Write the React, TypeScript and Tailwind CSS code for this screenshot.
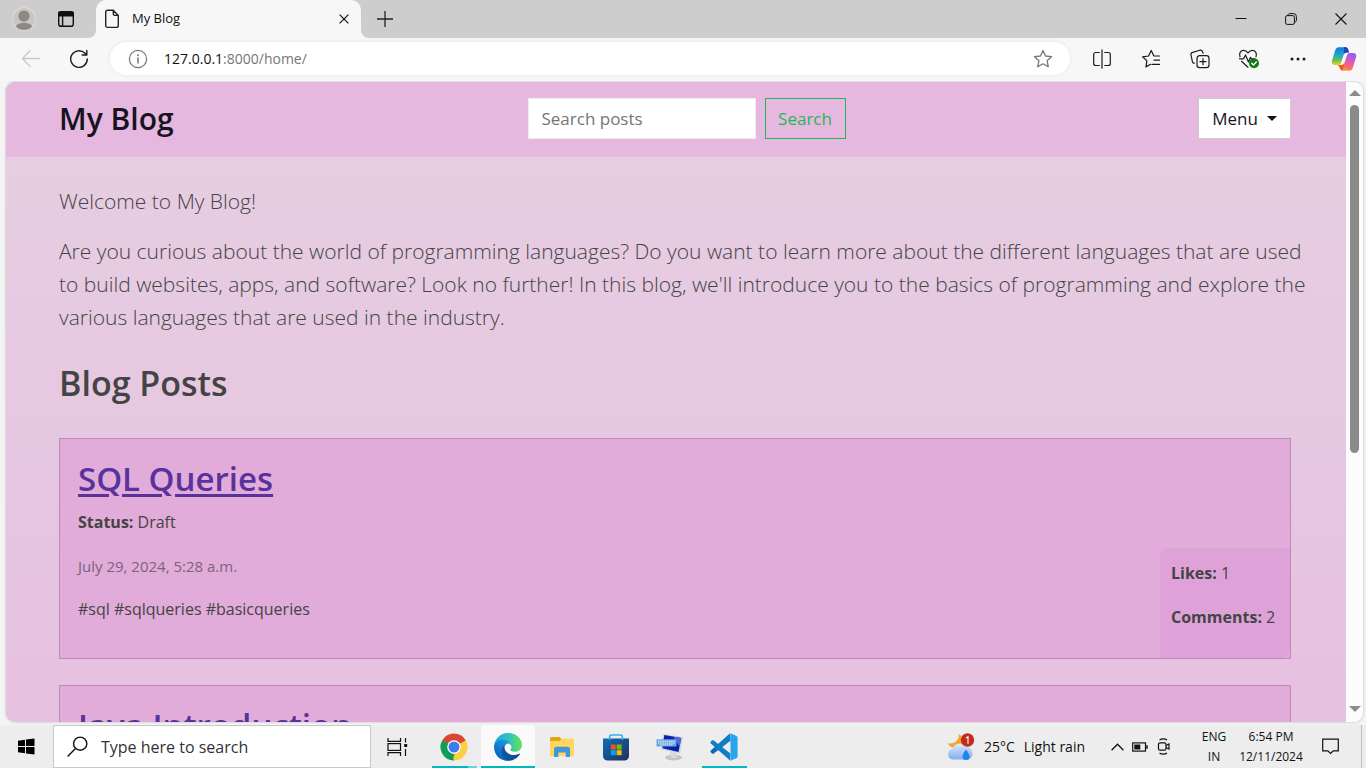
import React from "react";

type Post = { title: string; status?: string; date?: string; tags?: string; likes?: number; comments?: number };

const posts: Post[] = [
  { title: "SQL Queries", status: "Draft", date: "July 29, 2024, 5:28 a.m.", tags: "#sql #sqlqueries #basicqueries", likes: 1, comments: 2 },
  { title: "Java Introduction" },
];

function IconButton({ label, className, children }: { label: string; className: string; children: React.ReactNode }) {
  return (
    <button type="button" aria-label={label} className={`flex shrink-0 items-center justify-center ${className}`}>
      {children}
    </button>
  );
}

function Line({ size = 20, color = "#1b1b1b", width = 1.2, children }: { size?: number; color?: string; width?: number; children: React.ReactNode }) {
  return (
    <svg width={size} height={size} viewBox="0 0 20 20" fill="none" stroke={color} strokeWidth={width} strokeLinecap="round" strokeLinejoin="round">
      {children}
    </svg>
  );
}

function TabStrip() {
  return (
    <div className="flex h-[38px] shrink-0 bg-[#cdcdcd]">
      <IconButton label="Profile" className="w-12">
        <svg width="24" height="24" viewBox="0 0 24 24">
          <defs>
            <clipPath id="avatar">
              <circle cx="12" cy="12" r="11" />
            </clipPath>
          </defs>
          <circle cx="12" cy="12" r="11.4" fill="#c9c6c2" stroke="#dddbd8" strokeWidth="1.2" />
          <g clipPath="url(#avatar)" fill="#8b8885">
            <circle cx="12" cy="9" r="5.6" />
            <ellipse cx="12" cy="21.2" rx="9" ry="5.4" />
          </g>
        </svg>
      </IconButton>
      <IconButton label="Tab actions" className="w-9">
        <svg width="18" height="18" viewBox="0 0 18 18" fill="none" stroke="#111" strokeWidth="1.4">
          <rect x="1.7" y="1.7" width="14.6" height="14.6" rx="2.4" />
          <path d="M2 2.4h14v3.4H2z" fill="#111" />
          <path d="M5.6 6v10" />
        </svg>
      </IconButton>
      <div className="relative ml-3 flex w-[265px] items-center rounded-t-[10px] bg-[#f7f7f7] pl-[8px] pr-[9px] before:absolute before:-left-2 before:bottom-0 before:size-2 before:rounded-br-lg before:shadow-[4px_4px_0_4px_#f7f7f7] after:absolute after:-right-2 after:bottom-0 after:size-2 after:rounded-bl-lg after:shadow-[-4px_4px_0_4px_#f7f7f7]">
        <svg width="16" height="20" viewBox="0 0 16 20" fill="none" stroke="#222" strokeWidth="1.4" strokeLinejoin="round">
          <path d="M9.3 1.2H3.6a1.9 1.9 0 0 0-1.9 1.9v13.4a1.9 1.9 0 0 0 1.9 1.9h8.8a1.9 1.9 0 0 0 1.9-1.9V6.4zM9.3 1.2v3.6a1.6 1.6 0 0 0 1.6 1.6h3.4" />
        </svg>
        <span className="ml-3 flex-1 text-[13px] text-[#111]">My Blog</span>
        <IconButton label="Close tab" className="size-4">
          <svg width="10" height="10" viewBox="0 0 10 10" stroke="#111" strokeWidth="1.2">
            <path d="M.6.6l8.8 8.8M9.4.6L.6 9.4" />
          </svg>
        </IconButton>
      </div>
      <IconButton label="New tab" className="w-12">
        <svg width="16" height="16" viewBox="0 0 16 16" stroke="#222" strokeWidth="1.3">
          <path d="M8 0v16M0 8h16" />
        </svg>
      </IconButton>
      <div className="flex-1" />
      <IconButton label="Minimize" className="w-[50px]">
        <svg width="12" height="12" viewBox="0 0 12 12" stroke="#111" strokeWidth="1">
          <path d="M.5 5.5h11" />
        </svg>
      </IconButton>
      <IconButton label="Restore" className="w-[50px]">
        <svg width="12" height="12" viewBox="0 0 12 12" fill="none" stroke="#111" strokeWidth="1">
          <rect x=".6" y="2.6" width="8.8" height="8.8" rx="1.6" />
          <path d="M2.8 2.4C3 1.2 3.8.6 4.8.6h3.6a3 3 0 0 1 3 3v3.6c0 1-.6 1.8-1.8 2" />
        </svg>
      </IconButton>
      <IconButton label="Close" className="w-[50px]">
        <svg width="12" height="12" viewBox="0 0 12 12" stroke="#111" strokeWidth="1.1">
          <path d="M.5.5l11 11M11.5.5l-11 11" />
        </svg>
      </IconButton>
    </div>
  );
}

function Toolbar() {
  return (
    <div className="relative flex h-[43px] shrink-0 items-center bg-[#f7f7f7] pb-[2px] pl-[7px]">
      <IconButton label="Back" className="h-8 w-12">
        <Line color="#c9c9c9" width={1.3}>
          <path d="M18.5 9.5H1.5M9 1.8L1.5 9.5 9 17.2" />
        </Line>
      </IconButton>
      <IconButton label="Refresh" className="h-8 w-12">
        <Line width={1.4}>
          <path d="M18.3 10A8.3 8.3 0 1 1 15.8 4.1L17.8 6M17.8 1.4V6H13.2" />
        </Line>
      </IconButton>
      <div className="ml-[7px] flex h-[33px] flex-1 items-center rounded-full bg-white pl-[18px] pr-[17px] shadow-[0_0_4px_rgba(0,0,0,0.08)]">
        <Line color="#767676">
          <circle cx="10" cy="10" r="8.6" />
          <path d="M10 9v5" strokeWidth="1.5" />
          <path d="M10 6.1v.1" strokeWidth="1.9" />
        </Line>
        <a href="http://127.0.0.1:8000/home/" className="ml-4 flex-1 text-[14px] text-[#767676]">
          <span className="text-[#111]">127.0.0.1</span>:8000/home/
        </a>
        <IconButton label="Add to favorites" className="size-5">
          <Line color="#767676" width={1.3}>
            <path d="M10 1.5l2.5 5.5 6 .7-4.4 4.1 1.2 5.9L10 14.8l-5.3 2.9 1.2-5.9L1.5 7.7l6-.7z" />
          </Line>
        </IconButton>
      </div>
      <IconButton label="Split screen" className="ml-[7px] h-8 w-[49px]">
        <Line>
          <path d="M10 .8v18.4M7.3 3.5H3.7a2 2 0 0 0-2 2v9a2 2 0 0 0 2 2h3.6M12.7 3.5h3.6a2 2 0 0 1 2 2v9a2 2 0 0 1-2 2h-3.6" />
        </Line>
      </IconButton>
      <IconButton label="Favorites" className="h-8 w-[49px]">
        <Line>
          <path d="M18.5 7h-5.600L10.2 1.5 7.6 7l-6 .8 4.300 4.100-1 6 4.700-2.600M13 11.200h5.500M11 15.400h7.500" />
        </Line>
      </IconButton>
      <IconButton label="Collections" className="h-8 w-[49px]">
        <Line>
          <rect x="7" y="6.7" width="12" height="12" rx="2.6" />
          <path d="M13 9.700v6M10 12.700h6M4.300 14.200c-1 0-1.600-.6-1.900-1.500L1 6c-.3-1.300.3-2.300 1.600-2.600L9.800 1.200c1.200-.3 2.200.1 2.600 1.300l.8 1.700" />
        </Line>
      </IconButton>
      <IconButton label="Browser essentials" className="h-8 w-[49px]">
        <svg width="22" height="20" viewBox="0 0 22 20" fill="none" stroke="#1b1b1b" strokeWidth="1.2" strokeLinecap="round" strokeLinejoin="round">
          <path d="M2 7.800C.6 3.800 3 1.300 5.600 1.300c2 0 3.100.9 4.400 2.500 1.300-1.600 2.400-2.500 4.400-2.500 2.600 0 5 2.500 3.600 6.500M1.500 9.800h4l2-3.800 3 7 2-4.700 1 1.500h3M3.500 12.300l6.500 5.900" />
          <circle cx="16" cy="14.2" r="5" fill="#107c10" stroke="none" />
          <path d="M13.800 14.300l1.600 1.600 2.900-3" stroke="#fff" strokeWidth="1.4" />
        </svg>
      </IconButton>
      <IconButton label="Settings and more" className="h-8 w-[49px]">
        <svg width="16" height="4" viewBox="0 0 16 4" fill="#1b1b1b">
          <circle cx="2" cy="2" r="1.5" />
          <circle cx="8" cy="2" r="1.5" />
          <circle cx="14" cy="2" r="1.5" />
        </svg>
      </IconButton>
      <IconButton label="Copilot" className="h-8 w-[44px]">
        <svg width="26" height="24" viewBox="0 0 26 24">
          <defs>
            <linearGradient id="cpA" x1="0" y1="0" x2="0" y2="1">
              <stop offset="0" stopColor="#1b74e0" />
              <stop offset=".4" stopColor="#1ea3d8" />
              <stop offset=".7" stopColor="#5cc05c" />
              <stop offset="1" stopColor="#f2cf1d" />
            </linearGradient>
            <linearGradient id="cpB" x1=".6" y1="0" x2=".3" y2="1">
              <stop offset="0" stopColor="#9a5cf0" />
              <stop offset=".45" stopColor="#e05bb5" />
              <stop offset=".8" stopColor="#fb6f5f" />
              <stop offset="1" stopColor="#ffa43d" />
            </linearGradient>
          </defs>
          <path d="M18 5.500l-1-3C16.500.9 15.700.3 14.500.3H8C6 .3 4.800 1.500 4.200 3.300L1 13.500C.1 16.400 1.300 18 3.800 18h3c1.800 0 2.800-1 3.300-2.600l2.500-7.500C13 6.500 14 5.500 15.500 5.500z" fill="url(#cpA)" />
          <path d="M13 .3h1.500c1.500 0 2.200.8 2.600 2.200l1 3h-2.700c-1.200 0-2 .6-2.500 1.600z" fill="#1746b5" />
          <path d="M8 18.500l1 3c.5 1.600 1.300 2.200 2.500 2.200H18c2 0 3.200-1.200 3.800-3L25 10.500C25.900 7.600 24.700 6 22.200 6h-3c-1.800 0-2.800 1-3.300 2.600l-2.500 7.500c-.4 1.400-1.400 2.400-2.900 2.400z" fill="url(#cpB)" />
          <path d="M7 18h3.500c1.500 0 2.400-1 2.800-2.200l-1.500 7.800c-1.500 0-2.300-.7-2.700-2z" fill="#ee5a2a" />
        </svg>
      </IconButton>
    </div>
  );
}

function PostCard({ post }: { post: Post }) {
  return (
    <article className="relative min-h-[221px] shrink-0 border border-[#bb8ab6] bg-[#e1abda] px-[18px] pt-[19px] pb-9 text-[16px] leading-[26px] text-[#444]">
      <h2 className="text-[33px] font-semibold leading-[42px]">
        <a href="#post" className="text-[#5a329b] underline decoration-[3px] underline-offset-[3px]">
          {post.title}
        </a>
      </h2>
      {post.status && (
        <p className="mt-[9px]">
          <strong>Status:</strong> {post.status}
        </p>
      )}
      {post.date && <p className="mt-[18px] text-[15px] text-[#7b6478]">{post.date}</p>}
      {post.tags && <p className="mt-[17px]">{post.tags}</p>}
      {post.likes !== undefined && (
        <div className="absolute right-0 bottom-0 min-w-[130px] rounded-tl-[9px] rounded-br-[9px] bg-[#dfa2d8] px-[11px] pt-3 pb-7">
          <p>
            <strong>Likes:</strong> {post.likes}
          </p>
          <p className="mt-[18px]">
            <strong>Comments:</strong> {post.comments}
          </p>
        </div>
      )}
    </article>
  );
}

function BlogPage() {
  return (
    <div className="flex min-w-0 flex-1 flex-col overflow-hidden rounded-l-[9px] bg-linear-to-b from-[#e6cfe2] to-[#e6c1e0]">
      <header className="flex h-[75px] shrink-0 items-center justify-between bg-[#e6b8e0] pb-[2px] pl-[53px] pr-[55px]">
        <a href="#home" className="w-[320px] text-[30px] font-semibold text-[#16141f]">
          My Blog
        </a>
        <form className="mr-[33px] flex gap-[9px]" onSubmit={(e) => e.preventDefault()}>
          <input
            type="search"
            aria-label="Search posts"
            placeholder="Search posts"
            className="h-[41px] w-[228px] border border-[#ececec] bg-white px-[13px] text-[17px] text-[#222] placeholder:text-[#757575]"
          />
          <button type="submit" className="h-[41px] w-[81px] border border-[#1db954] text-[17px] text-[#1db954]">
            Search
          </button>
        </form>
        <div className="flex w-[264px] justify-end">
          <button type="button" className="flex h-[41px] w-[93px] items-center justify-center gap-[9px] border border-[#ccc] bg-white text-[17px] text-[#16141f]">
            Menu
            <span className="border-x-5 border-t-5 border-x-transparent border-t-[#16141f]" />
          </button>
        </div>
      </header>
      <main className="flex min-h-0 flex-1 flex-col overflow-hidden pl-[53px] pr-[35px] pt-7">
        <div className="flex shrink-0 flex-col gap-[17px] text-[21px] font-light leading-[33px] text-[#444]">
          <p>Welcome to My Blog!</p>
          <p>
            Are you curious about the world of programming languages? Do you want to learn more about the different languages that are used to build
            websites, apps, and software? Look no further! In this blog, we'll introduce you to the basics of programming and explore the various
            languages that are used in the industry.
          </p>
        </div>
        <h1 className="mt-7 text-[34px] font-semibold leading-[42px] text-[#444]">Blog Posts</h1>
        <div className="mr-5 mt-[34px] flex shrink-0 flex-col gap-[26px]">
          {posts.map((post) => (
            <PostCard key={post.title} post={post} />
          ))}
        </div>
      </main>
    </div>
  );
}

function Scrollbar() {
  return (
    <div className="flex w-[17px] shrink-0 flex-col items-center rounded-r-[9px] bg-[#fcfcfc] pb-[10px] pt-2">
      <span className="border-x-6 border-b-6 border-x-transparent border-b-[#8b8b8b]" />
      <span className="mt-[9px] h-[56%] w-[9px] rounded-full bg-[#8b8b8b]" />
      <span className="mt-auto border-x-6 border-t-6 border-x-transparent border-t-[#8b8b8b]" />
    </div>
  );
}

function TaskButton({ label, className = "", underline = "", children }: { label: string; className?: string; underline?: string; children: React.ReactNode }) {
  return (
    <button type="button" aria-label={label} className={`flex w-[54px] shrink-0 flex-col items-center pt-[2px] ${className}`}>
      <span className="flex flex-1 items-center">{children}</span>
      <span className={`h-[2px] ${underline}`} />
    </button>
  );
}

function Chrome() {
  return (
    <svg width="28" height="28" viewBox="0 0 28 28">
      <path d="M14 14L2.300 7.250A13.500 13.500 0 0 1 25.700 7.250z" fill="#db4437" />
      <path d="M14 14L25.700 7.250A13.500 13.500 0 0 1 14 27.500z" fill="#ffcd40" />
      <path d="M14 14v13.500A13.500 13.500 0 0 1 2.300 7.250z" fill="#0f9d58" />
      <path d="M14 7.250h11.700L14 14z" fill="#db4437" />
      <path d="M19.850 17.370L14 27.500V14z" fill="#ffcd40" />
      <path d="M19.850 17.370L14 27.500L11 19z" fill="#ffcd40" />
      <path d="M8.150 17.370L2.300 7.250L14 14z" fill="#0f9d58" />
      <path d="M8.150 17.370c2 3.500 4.500 3.600 6.500 3.300L12.500 27.500 7 20z" fill="#0f9d58" />
      <circle cx="14" cy="14" r="6.800" fill="#fff" />
      <circle cx="14" cy="14" r="5.500" fill="#3b7ded" />
    </svg>
  );
}

function Edge() {
  return (
    <svg width="28" height="28" viewBox="0 0 256 256">
      <defs>
        <linearGradient id="edA" x1="63" y1="177" x2="241" y2="177" gradientUnits="userSpaceOnUse">
          <stop offset="0" stopColor="#0c59a4" />
          <stop offset="1" stopColor="#114a8b" />
        </linearGradient>
        <linearGradient id="edB" x1="157" y1="100" x2="46" y2="222" gradientUnits="userSpaceOnUse">
          <stop offset="0" stopColor="#1b9de2" />
          <stop offset="1" stopColor="#0c66c0" />
        </linearGradient>
        <linearGradient id="edC" x1="0" y1="80" x2="250" y2="90" gradientUnits="userSpaceOnUse">
          <stop offset="0" stopColor="#26a8dd" />
          <stop offset=".5" stopColor="#2cc3c0" />
          <stop offset="1" stopColor="#66e05a" />
        </linearGradient>
      </defs>
      <path fill="url(#edA)" d="M231 190.500c-3.400 1.800-6.900 3.400-10.500 4.700a101.700 101.700 0 0 1-35.900 6.500c-47.300 0-88.500-32.500-88.500-74.300a31.500 31.500 0 0 1 16.400-27.300c-42.800 1.800-53.800 46.400-53.800 72.500 0 74 68.100 81.400 82.800 81.400 7.900 0 19.800-2.300 27-4.600l1.300-.4a128.300 128.300 0 0 0 66.600-52.800 4 4 0 0 0-5.400-5.700z" />
      <path fill="url(#edB)" d="M105.700 241.400a79.200 79.200 0 0 1-22.700-21.300 80.700 80.700 0 0 1 29.500-120c3.200-1.500 8.500-4.100 15.600-4a32.400 32.400 0 0 1 25.700 13 31.900 31.900 0 0 1 6.300 18.700c0-.2 24.500-79.600-80-79.600C36.200 48.200.1 89.900.1 126.400A130.400 130.400 0 0 0 12.200 182.400a128 128 0 0 0 156.400 67 75.500 75.500 0 0 1-62.800-8z" />
      <path fill="url(#edC)" d="M152.300 148.900c-.9 1-3.400 2.500-3.400 5.600 0 2.600 1.700 5.200 4.800 7.300 14.300 10 41.400 8.600 41.500 8.600a59.600 59.600 0 0 0 30.300-8.300 61.400 61.400 0 0 0 30.400-52.900c.3-22.400-8-37.300-11.300-43.900C223.500 23.900 177.700 0 128 0A128 128 0 0 0 0 126.200c.5-36.500 36.800-66 80-66 3.500 0 23.500.3 42 10.100a72.600 72.600 0 0 1 30.900 29.300c6.100 10.600 7.200 24.100 7.200 29.500s-2.700 13.300-7.800 19.900z" />
    </svg>
  );
}

function Taskbar() {
  return (
    <div className="flex h-[43px] shrink-0 bg-[#ededed] text-[#111]">
      <IconButton label="Start" className="w-[53px]">
        <svg width="17" height="17" viewBox="0 0 17 17">
          <path d="M0 2.800l7-1v6.200H0zM8 1.600L16.500.4V8H8zM0 9h7v6.200l-7-1zM8 9h8.500v7.600L8 15.400z" />
        </svg>
      </IconButton>
      <label className="flex w-[318px] items-center border border-[#c8c8c8] bg-white pl-[13px]">
        <svg width="21" height="21" viewBox="0 0 21 21" fill="none" stroke="#111" strokeWidth="1.4">
          <circle cx="13.2" cy="7.7" r="6.6" />
          <path d="M8.500 12.500L.6 20.400" />
        </svg>
        <input aria-label="Type here to search" placeholder="Type here to search" className="ml-[13px] min-w-0 flex-1 text-[16px] placeholder:text-[#333]" />
      </label>
      <IconButton label="Task view" className="mr-1 w-[52px]">
        <svg width="22" height="20" viewBox="0 0 22 20" fill="none" stroke="#111" strokeWidth="1.2">
          <path d="M2 1v3.400h12.500V1M2 19v-3.400h12.500V19" />
          <rect x="2" y="6.600" width="12.500" height="6.800" />
          <path d="M19.500 1v4.500M19.500 12v7" />
          <path d="M18.200 7h3v3h-3z" fill="#111" stroke="none" />
        </svg>
      </IconButton>
      <TaskButton label="Google Chrome" underline="w-[45px] border-r-9 border-[#66d4da] bg-[#00b7c3]">
        <Chrome />
      </TaskButton>
      <TaskButton label="Microsoft Edge" className="bg-[#fafafa]" underline="w-full bg-[#00b7c3]">
        <Edge />
      </TaskButton>
      <TaskButton label="File Explorer">
        <svg width="26" height="22" viewBox="0 0 26 22">
          <path d="M1 2.500C1 1.600 1.600 1 2.500 1h8l2 2v4H1z" fill="#e6a414" />
          <path d="M1 5h10l2-2.500h10.500c.9 0 1.500.6 1.500 1.500v16H2.500C1.600 20 1 19.400 1 18.500z" fill="#ffd65f" />
          <path d="M5 21v-8a2.300 2.300 0 0 1 2.300-2.300h11.400A2.300 2.300 0 0 1 21 13v8h-4.300v-4.500H9.300V21z" fill="#3f98dc" />
        </svg>
      </TaskButton>
      <TaskButton label="Microsoft Store">
        <svg width="28" height="28" viewBox="0 0 28 28">
          <defs>
            <linearGradient id="store" x1="0" y1="0" x2="1" y2="1">
              <stop offset="0" stopColor="#0f6cb8" />
              <stop offset="1" stopColor="#22305f" />
            </linearGradient>
          </defs>
          <path d="M7.700 8V3.400c0-.8.500-1.400 1.400-1.400h9.800c.9 0 1.400.6 1.400 1.400V8" fill="none" stroke="#2bb4ee" strokeWidth="1.6" />
          <path d="M1 5.500h26V23a4.500 4.500 0 0 1-4.500 4.500h-17A4.500 4.500 0 0 1 1 23z" fill="url(#store)" />
          <path d="M8.800 11.500h5v5h-5z" fill="#f25022" />
          <path d="M14.600 11.500h5v5h-5z" fill="#7fba00" />
          <path d="M8.800 17.200h5v5h-5z" fill="#00a4ef" />
          <path d="M14.600 17.200h5v5h-5z" fill="#ffb900" />
          <path d="M7.700 5v2M20.300 5v2" stroke="#2bb4ee" strokeWidth="1.6" />
        </svg>
      </TaskButton>
      <TaskButton label="On-screen keyboard">
        <svg width="28" height="28" viewBox="0 0 28 28">
          <ellipse cx="17.500" cy="24.500" rx="8.500" ry="3" fill="#c4c4c4" />
          <path d="M14 19l6 1 1 5h-6z" fill="#d9d9d9" />
          <path d="M7 1l20 3-3 17L5 16.500z" fill="#d4d6dd" />
          <path d="M8.300 2l17 3-2.800 14L6.500 15.300z" fill="#0b1fae" />
          <path d="M17 3.500l8.300 1.500-1.800 9z" fill="#4f66dd" />
          <path d="M.5 6.300h20v7.200H.5z" fill="#65a8e0" />
          <path d="M2 8.200h17M2 10h17M4 11.900h13" stroke="#e4f1fb" strokeWidth="1" strokeDasharray="1.500 .7" />
        </svg>
      </TaskButton>
      <TaskButton label="Visual Studio Code" underline="w-[45px] bg-[#00b7c3]">
        <svg width="28" height="28" viewBox="0 0 28 28">
          <path d="M20.500 20.500L3.700 7.600c-.6-.4-1.300-.4-1.800 0L.8 8.700c-.5.500-.5 1.300 0 1.800L20 27.600z" fill="#0f7ec6" />
          <path d="M20.500 7.500L3.700 20.400c-.6.400-1.300.4-1.800 0L.8 19.300c-.5-.5-.5-1.300 0-1.800L20 .4z" fill="#0a69ae" />
          <path d="M20.500 7.500L7 17.900l-2.500-3.100L20 .4z" fill="#0f7ec6" />
          <path d="M20.200.3l6.400 2.800c.6.300 1 .9 1 1.500v18.800c0 .7-.4 1.200-1 1.500l-6.400 2.800c-.5.200-1 .1-1.400-.3.800.7 1.700.2 1.700-1V1.600c0-1.200-.9-1.700-1.700-1 .4-.4.900-.5 1.400-.3z" fill="#28a5ef" />
        </svg>
      </TaskButton>
      <div className="flex-1" />
      <button type="button" className="flex items-center text-[14px]">
        <svg width="28" height="28" viewBox="0 0 28 28">
          <defs>
            <linearGradient id="cloud" x1="0" y1="0" x2="0" y2="1">
              <stop offset="0" stopColor="#dce9fb" />
              <stop offset="1" stopColor="#83aee8" />
            </linearGradient>
          </defs>
          <path d="M11.500 1c1 5-2 10-10.500 9.500 2 5 10 6 14 1 2.500-4 0-9-3.500-10.500z" fill="#f5a52a" />
          <path d="M6 26.500a5.300 5.300 0 0 1-.5-10.500A7.500 7.500 0 0 1 19 14a6.500 6.500 0 0 1 2.500 12.500z" fill="url(#cloud)" />
          <path d="M19 16.500c2 2.800 3.500 5 3.500 7a3.500 3.500 0 0 1-7 0c0-2 1.500-4.200 3.500-7z" fill="#1b86ee" />
          <circle cx="20.500" cy="7" r="6.700" fill="#c42b1c" />
          <path d="M19 5l2-1.300v7" fill="none" stroke="#fff" strokeWidth="1.100" />
        </svg>
        <span className="ml-[9px]">25°C</span>
        <span className="ml-[9px]">Light rain</span>
      </button>
      <IconButton label="Show hidden icons" className="ml-[25px] w-[15px]">
        <svg width="13" height="8" viewBox="0 0 13 8" fill="none" stroke="#111" strokeWidth="1.3">
          <path d="M.6 7.200L6.500 1.200l5.900 6" />
        </svg>
      </IconButton>
      <IconButton label="Battery" className="ml-[7px] w-4">
        <svg width="16" height="10" viewBox="0 0 16 10" fill="none" stroke="#111" strokeWidth="1.2">
          <rect x=".7" y=".9" width="12.800" height="8.200" />
          <path d="M15 3.200v3.600" strokeWidth="1.5" />
          <path d="M2.300 2.500h6v5h-6z" fill="#111" stroke="none" />
        </svg>
      </IconButton>
      <IconButton label="Meet now" className="ml-2 w-4">
        <svg width="14" height="17" viewBox="0 0 14 17" fill="none" stroke="#111" strokeWidth="1.2">
          <rect x="1.500" y="4.800" width="7.500" height="7.400" rx="1.500" />
          <path d="M9 7.500l3-1.500v5L9 9.500M2.500 2c2-1.500 5.500-1.500 7.500 0M2.500 15c2 1.500 5.500 1.500 7.500 0" />
        </svg>
      </IconButton>
      <button type="button" className="ml-[21px] flex w-[42px] flex-col items-center justify-center text-[12px] leading-[20px]">
        <span>ENG</span>
        <span>IN</span>
      </button>
      <button type="button" className="flex w-[72px] flex-col items-center justify-center text-[12px] leading-[20px]">
        <span>6:54 PM</span>
        <span>12/11/2024</span>
      </button>
      <IconButton label="Notifications" className="w-[46px]">
        <svg width="17" height="17" viewBox="0 0 17 17" fill="none" stroke="#111" strokeWidth="1.2">
          <path d="M.7 1.200h15.600v11.600h-5.100L8.500 15.500l-2.700-2.700H.7z" />
        </svg>
      </IconButton>
      <div className="ml-2 w-[5px] border-l border-[#bdbdbd]" />
    </div>
  );
}

export default function App() {
  return (
    <div className="flex h-screen flex-col overflow-hidden bg-[#f4f4f4] font-['Open_Sans','Noto_Sans',sans-serif]">
      <TabStrip />
      <Toolbar />
      <div className="flex min-h-0 flex-1 px-[3px] pb-[3px] pl-[6px] pt-px">
        <div className="flex min-w-0 flex-1 rounded-[9px] shadow-[0_0_2px_1px_rgba(0,0,0,0.12)]">
          <BlogPage />
          <Scrollbar />
        </div>
      </div>
      <Taskbar />
    </div>
  );
}
